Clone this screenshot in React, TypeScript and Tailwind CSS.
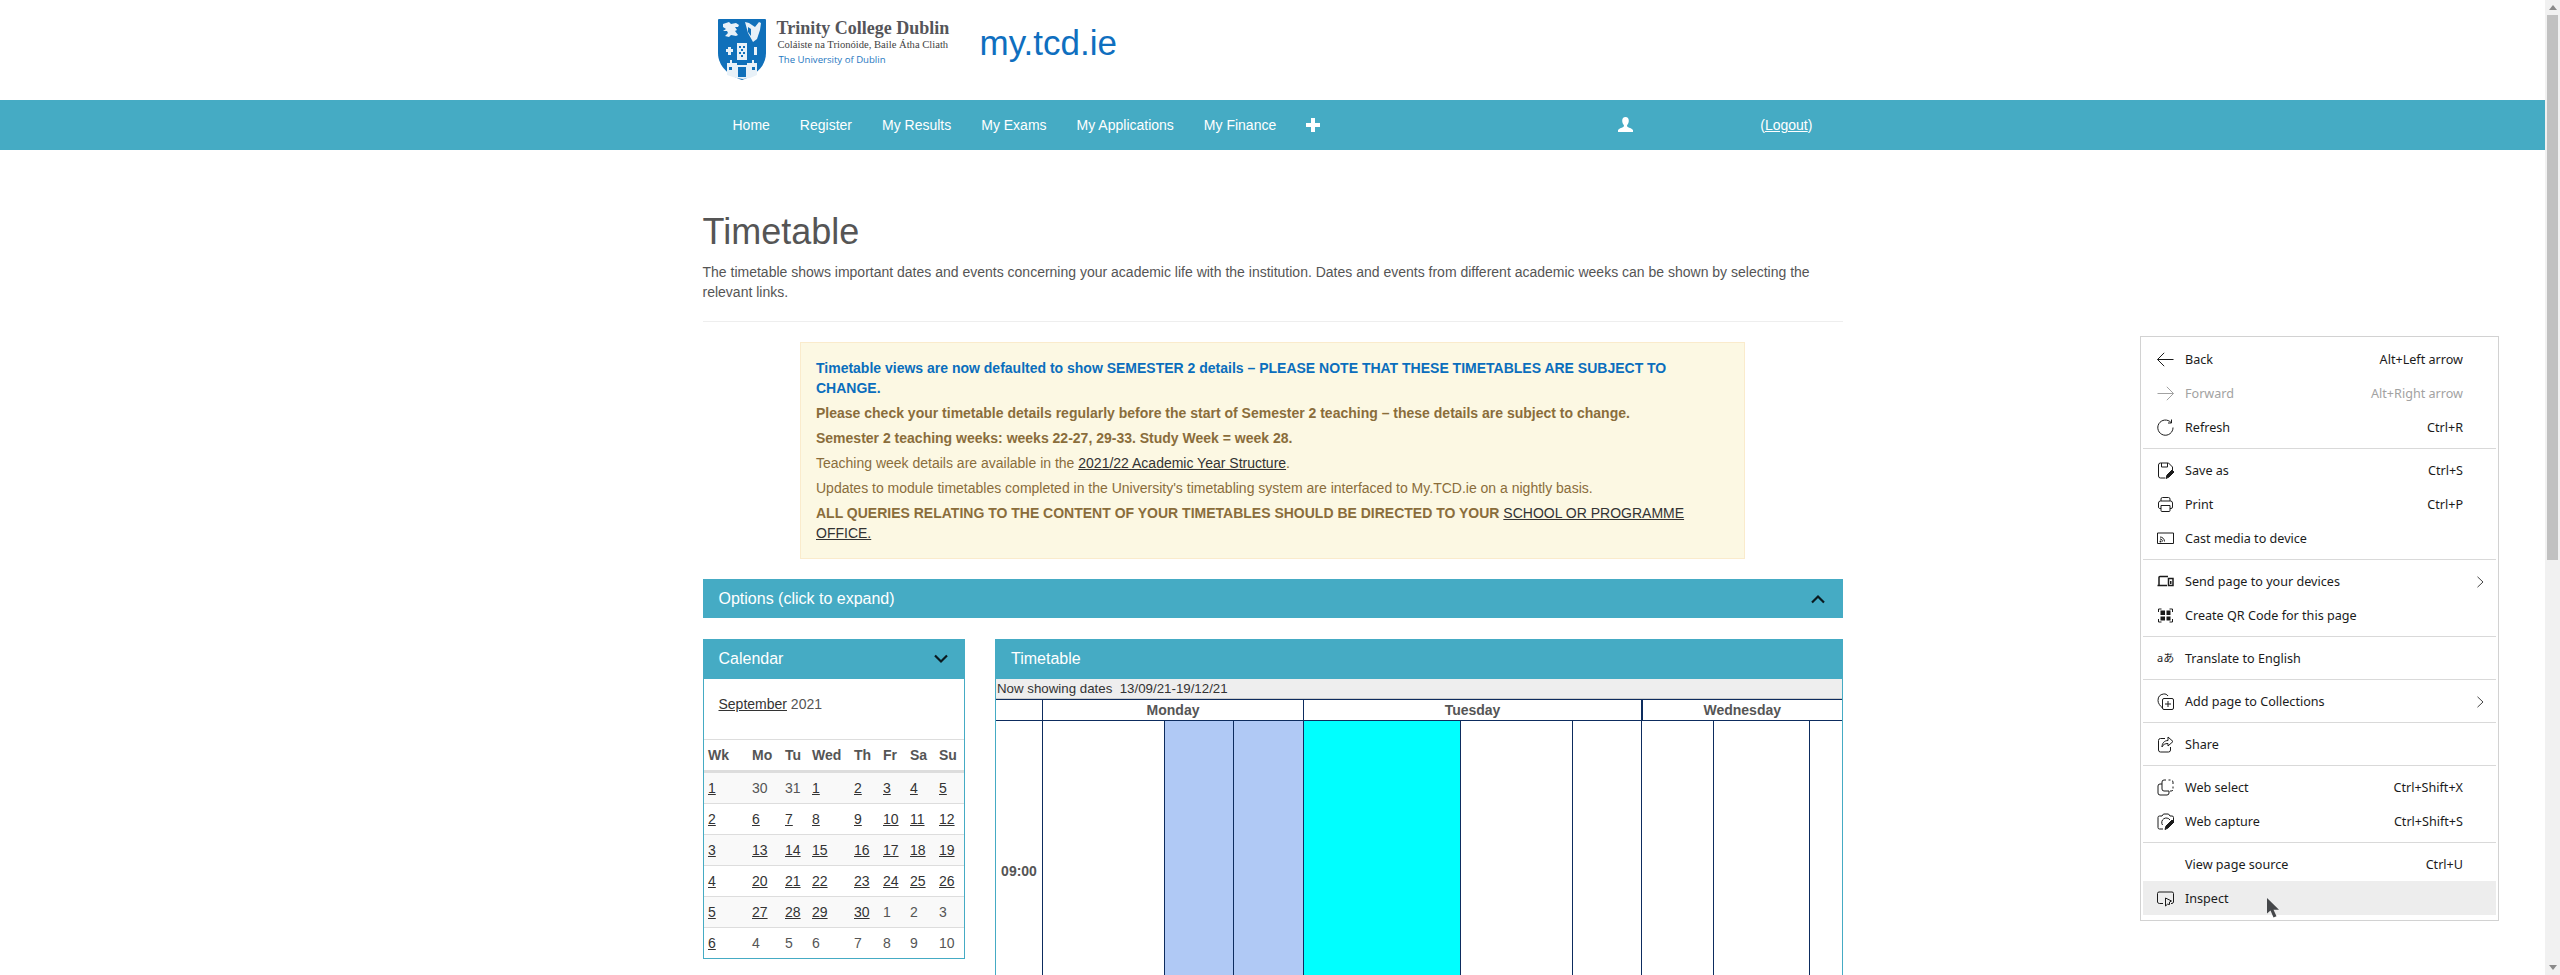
import type { ReactNode } from 'react'

const calendarHead = ['Wk', 'Mo', 'Tu', 'Wed', 'Th', 'Fr', 'Sa', 'Su']

// a leading ~ means the day is plain text, not a link
const calendarRows = [
  ['1', '~30', '~31', '1', '2', '3', '4', '5'],
  ['2', '6', '7', '8', '9', '10', '11', '12'],
  ['3', '13', '14', '15', '16', '17', '18', '19'],
  ['4', '20', '21', '22', '23', '24', '25', '26'],
  ['5', '27', '28', '29', '30', '~1', '~2', '~3'],
  ['6', '~4', '~5', '~6', '~7', '~8', '~9', '~10'],
]

const navLinks = ['Home', 'Register', 'My Results', 'My Exams', 'My Applications', 'My Finance']

function MenuIcon({ children }: { children: ReactNode }) {
  return (
    <svg width="17" height="17" viewBox="0 0 17 17" fill="none" stroke="currentColor" strokeWidth="1" className="shrink-0 -mt-[2px]">
      {children}
    </svg>
  )
}

const icons: Record<string, ReactNode> = {
  back: <MenuIcon><path d="M.5 8.5h16M7.2 1.8.5 8.5l6.7 6.7" /></MenuIcon>,
  forward: <MenuIcon><path d="M.5 8.5h16M9.8 1.8l6.7 6.7-6.7 6.7" /></MenuIcon>,
  refresh: <MenuIcon><path d="M14 3.5A7.6 7.6 0 1 0 16 8.5M14.5.5v3.5H11" /></MenuIcon>,
  save: (
    <MenuIcon>
      <path d="M8 16H3.5a2 2 0 0 1-2-2V3a2 2 0 0 1 2-2h8l4 4v3M4.5 1v4h6V1" />
      <path d="M9 16.5l1-3.5 5-5 2 2-5 5z" fill="currentColor" />
    </MenuIcon>
  ),
  print: (
    <MenuIcon>
      <path d="M4 5V3a1.500 1.500 0 0 1 1.500-1.500h6A1.500 1.500 0 0 1 13 3v2" />
      <path d="M4 12.500H2.500a1.500 1.500 0 0 1-1-1.400V7a2 2 0 0 1 2-2h10a2 2 0 0 1 2 2v4a1.500 1.500 0 0 1-1.500 1.500H13" />
      <path d="M4 9.500h9v5a1 1 0 0 1-1 1H5a1 1 0 0 1-1-1z" />
    </MenuIcon>
  ),
  cast: (
    <MenuIcon>
      <path d="M.5 3h16v10.500H.5z" />
      <path d="M3 7c2.500 0 4.500 2 4.500 4.500M3 9c1.500 0 2.500 1 2.500 2.500" />
      <circle cx="3.500" cy="11.500" r="1" fill="currentColor" stroke="none" />
    </MenuIcon>
  ),
  send: (
    <MenuIcon>
      <path d="M2 12V4.500A1 1 0 0 1 3 3.500h8M.5 12.500H10" strokeWidth="1.500" />
      <path d="M11.500 5.500h4.500v7h-4.500z" strokeWidth="1.500" />
      <path d="M13 8h1.500v3H13z" fill="currentColor" stroke="none" />
    </MenuIcon>
  ),
  qr: (
    <MenuIcon>
      <path d="M1.500 5V2h3M12.500 2h3v3M15.500 12v3h-3M4.500 15h-3v-3" />
      <path d="M3.500 3.500h4.500v4.500H3.500zM9.500 3.500h4v4.500h-4zM3.500 9.500h4.500v4H3.500zM9.500 9.500h4v4h-4z" fill="currentColor" stroke="none" />
    </MenuIcon>
  ),
  translate: <span className="w-[17px] shrink-0 text-[11px] leading-none whitespace-nowrap -mt-[3px]">a<span className="[font-family:'Noto_Sans_CJK_JP',sans-serif]">あ</span></span>,
  collections: (
    <MenuIcon>
      <path d="M5.500 15C3 13 1 10 1 7.500 1 3.500 3 1.500 6.500 1c2-.3 3.500.5 4.500 2" />
      <path d="M7 5.500h8a1.500 1.500 0 0 1 1.500 1.500v8a1.500 1.500 0 0 1-1.500 1.500H7A1.500 1.500 0 0 1 5.500 15V7A1.500 1.500 0 0 1 7 5.500zM11 8v6M8 11h6" />
    </MenuIcon>
  ),
  share: (
    <MenuIcon>
      <path d="M8 2.500H3.500a2 2 0 0 0-2 2V14a2 2 0 0 0 2 2h8a2 2 0 0 0 2-2v-3" />
      <path d="M11 1l5 4.500-5 4.500V7.500c-3 0-5 1-6 3.500 0-4 2.500-6.500 6-6.500z" />
    </MenuIcon>
  ),
  select: (
    <MenuIcon>
      <path d="M5 5V3a2 2 0 0 1 2-2h2M11.500 1h2M15 1.500a2 2 0 0 1 1 1.500v2M16 7.500v2M16 11a2 2 0 0 1-2 1h-1" />
      <path d="M5 5H3a2 2 0 0 0-2 2v7a2 2 0 0 0 2 2h7a2 2 0 0 0 2-2v-2H7a2 2 0 0 1-2-2z" />
    </MenuIcon>
  ),
  capture: (
    <MenuIcon>
      <path d="M5 3l1.500-2h5L13 3h2a1.500 1.500 0 0 1 1.500 1.500V8M6 16H2.500A1.500 1.500 0 0 1 1 14.500v-10A1.500 1.500 0 0 1 2.500 3H5" />
      <path d="M5.500 12a4.500 4.500 0 1 1 7.500-5" />
      <path d="M8 16.500l1-3.500 6-6 2 2-6 6z" fill="currentColor" />
    </MenuIcon>
  ),
  inspect: (
    <MenuIcon>
      <path d="M6 13.500H2.500a2 2 0 0 1-2-1.500V3.500a1.500 1.500 0 0 1 1.500-1.500h13a1.500 1.500 0 0 1 1.500 1.500V12a2 2 0 0 1-1.500 1.500H14" />
      <path d="M8.500 8v8l2-1.800 2 .3V12l2-1z" />
    </MenuIcon>
  ),
}

type MenuRow = { label: string; icon?: string; keys?: string; sub?: boolean; off?: boolean; hover?: boolean }

const menu: MenuRow[][] = [
  [
    { label: 'Back', icon: 'back', keys: 'Alt+Left arrow' },
    { label: 'Forward', icon: 'forward', keys: 'Alt+Right arrow', off: true },
    { label: 'Refresh', icon: 'refresh', keys: 'Ctrl+R' },
  ],
  [
    { label: 'Save as', icon: 'save', keys: 'Ctrl+S' },
    { label: 'Print', icon: 'print', keys: 'Ctrl+P' },
    { label: 'Cast media to device', icon: 'cast' },
  ],
  [
    { label: 'Send page to your devices', icon: 'send', sub: true },
    { label: 'Create QR Code for this page', icon: 'qr' },
  ],
  [{ label: 'Translate to English', icon: 'translate' }],
  [{ label: 'Add page to Collections', icon: 'collections', sub: true }],
  [{ label: 'Share', icon: 'share' }],
  [
    { label: 'Web select', icon: 'select', keys: 'Ctrl+Shift+X' },
    { label: 'Web capture', icon: 'capture', keys: 'Ctrl+Shift+S' },
  ],
  [
    { label: 'View page source', keys: 'Ctrl+U' },
    { label: 'Inspect', icon: 'inspect', hover: true },
  ],
]

function ContextMenu() {
  return (
    <div className="absolute left-[2140px] top-[336px] w-[359px] border border-[#d2d2d2] bg-white px-[2px] py-[5px] font-['Noto_Sans',sans-serif] text-[12.600px] text-[#1b1b1b]">
      {menu.map((group, i) => (
        <div key={i}>
          {i > 0 && <div className="my-[4px] h-px bg-[#d9d9d9]" />}
          {group.map((row) => (
            <div
              key={row.label}
              className={`flex h-[34px] items-center pt-[2px] pl-[14px] ${row.sub ? 'pr-[12px]' : 'pr-[33px]'} ${row.hover ? 'bg-[#ededed]' : ''} ${row.off ? 'text-[#a2a2a2]' : ''}`}
            >
              <span className="flex w-[28px] shrink-0 items-center">{row.icon && icons[row.icon]}</span>
              <span>{row.label}</span>
              {row.keys && <span className="ml-auto">{row.keys}</span>}
              {row.sub && (
                <svg width="7" height="12" viewBox="0 0 7 12" fill="none" stroke="#444" className="ml-auto">
                  <path d="M.5.800l5.500 5.200-5.500 5.200" />
                </svg>
              )}
            </div>
          ))}
        </div>
      ))}
    </div>
  )
}

function TcdLogo() {
  return (
    <div className="flex items-start">
      <svg width="48" height="61" viewBox="0 0 48 61" className="shrink-0">
        <path d="M1 0h46a1 1 0 0 1 1 1v33c0 14-12 23-24 27C12 57 0 48 0 34V1a1 1 0 0 1 1-1z" fill="#1070ba" />
        <g fill="#e8f1f8">
          <path d="M5 5l6-2 2 2 5-1 3 2-1 2-3 0 2 3-2 1 3 4-2 1-5-1-2 2-4-1 3-3-1-2-4 0 3-2-3-2z" />
          <path d="M27 3l4 1 6 4 4-5 2 1-1 7-3 9-4 3-5-9z" />
          <path d="M19 24h10v17H19z" />
          <path d="M10 28h3v2h2v3h-2v3h-3v-3H8v-3h2zM36 28h3v8h-3z" />
          <path d="M9 44h3v-3h2v3h5v2h10v-2h5v-3h2v3h3v12l-7 3-7 1-7-1-9-3z" />
        </g>
        <g fill="#1070ba">
          <path d="M21 27h2v2h-2zM25 27h2v2h-2zM23 30h2v2h-2zM21 33h2v2h-2zM25 33h2v2h-2zM23 36h2v2h-2z" />
          <path d="M20 48h8v10h-8zM11 48h3v3h-3zM34 48h3v3h-3z" />
          <path d="M30 8l3 2v7l-3-4z" />
        </g>
      </svg>
      <div className="ml-[11px] w-[175px] pt-[1px]">
        <div className="h-[17px] whitespace-nowrap font-['Liberation_Serif',serif] text-[18px] leading-[17px] font-bold text-[#55555a]">Trinity College Dublin</div>
        <div className="mt-[1px] h-[13px] whitespace-nowrap pl-[1px] font-['Liberation_Serif',serif] text-[10.600px] leading-[13px] text-[#3f3f42]">Coláiste na Trionóide, Baile Átha Cliath</div>
        <div className="mt-[2px] h-[13px] whitespace-nowrap pl-[2px] font-['Open_Sans',sans-serif] text-[9.600px] leading-[13px] text-[#1f78c1]">The University of Dublin</div>
      </div>
    </div>
  )
}

function Chevron({ up }: { up?: boolean }) {
  return (
    <svg width="14" height="10" viewBox="0 0 14 10" fill="none" stroke="#0a1a20" strokeWidth="2.200">
      <path d={up ? 'M1 8.500l6-6 6 6' : 'M1 1.500l6 6 6-6'} />
    </svg>
  )
}

function Calendar() {
  return (
    <div>
      <div className="flex h-[40px] items-center justify-between bg-[#45abc4] pl-[16px] pr-[17px] text-base text-white">
        <span>Calendar</span>
        <Chevron />
      </div>
      <div className="border-x border-b border-[#45abc4]">
        <p className="px-[15px] pt-[15px] pb-[25px] leading-[20px] text-[#555]">
          <a className="text-[#333] underline">September</a> 2021
        </p>
        <table className="w-full table-fixed border-separate border-spacing-0">
          <colgroup>
            <col className="w-[44px]" />
            <col className="w-[33px]" />
            <col className="w-[27px]" />
            <col className="w-[42px]" />
            <col className="w-[29px]" />
            <col className="w-[27px]" />
            <col className="w-[29px]" />
            <col />
          </colgroup>
          <thead>
            <tr>
              {calendarHead.map((h) => (
                <th key={h} className="h-[34px] border-t border-b-[3px] border-t-[#ddd] border-b-[#ddd] pl-[4.500px] text-left font-bold text-[#555]">{h}</th>
              ))}
            </tr>
          </thead>
          <tbody>
            {calendarRows.map((row, r) => (
              <tr key={r} className={r % 2 === 0 ? 'bg-[#f9f9f9]' : ''}>
                {row.map((day, c) => (
                  <td key={c} className={`pl-[4.500px] ${r < 5 ? 'h-[31px] border-b border-[#ddd]' : 'h-[30px]'}`}>
                    {day.startsWith('~') ? <span className="text-[#555]">{day.slice(1)}</span> : <a className="text-[#333] underline">{day}</a>}
                  </td>
                ))}
              </tr>
            ))}
          </tbody>
        </table>
      </div>
    </div>
  )
}

function Timetable() {
  const line = 'border-l border-[#0d2c5e]'
  return (
    <div className="border-x border-[#45abc4]">
      <div className="-mx-px flex h-[40px] items-center bg-[#45abc4] pl-[16px] text-base text-white">Timetable</div>
      <div className="h-[20px] border-b border-[#ccc] bg-[#eee] pl-[1px] text-[13.300px] leading-[19px] whitespace-pre text-[#333]">Now showing dates  13/09/21-19/12/21</div>
      <table className="w-full table-fixed border-separate border-spacing-0">
        <colgroup>
          <col className="w-[46px]" />
          <col className="w-[122px]" />
          <col className="w-[69px]" />
          <col className="w-[70px]" />
          <col className="w-[157px]" />
          <col className="w-[112px]" />
          <col className="w-[69px]" />
          <col className="w-[72px]" />
          <col className="w-[96px]" />
          <col />
        </colgroup>
        <thead>
          <tr className="text-center font-bold text-[#555]">
            <th className="h-[22px] border-y border-[#0d2c5e]" />
            <th colSpan={3} className={`border-y border-[#0d2c5e] ${line}`}>Monday</th>
            <th colSpan={3} className={`border-y border-[#0d2c5e] ${line}`}>Tuesday</th>
            <th colSpan={3} className="border-y border-l-2 border-[#0d2c5e]">Wednesday</th>
          </tr>
        </thead>
        <tbody>
          <tr>
            <th className="h-[300px] font-bold text-[#555]">09:00</th>
            <td className={line} />
            <td className={`${line} bg-[#b0c9f5]`} />
            <td className={`${line} bg-[#b0c9f5]`} />
            <td className={`${line} bg-[#00ffff]`} />
            <td className={line} />
            <td className={line} />
            <td className={line} />
            <td className={line} />
            <td className={line} />
          </tr>
        </tbody>
      </table>
    </div>
  )
}

export default function App() {
  return (
    <div className="flex h-[975px] overflow-hidden bg-white font-['Liberation_Sans',Arial,sans-serif] text-sm">
      <main className="relative min-w-0 flex-1">
        <header className="mx-auto flex h-[100px] w-[1170px] items-start px-[30px] pt-[19px]">
          <TcdLogo />
          <a className="ml-[28px] mt-[3px] text-[35px] leading-[42px] text-[#0f6fbf]">my.tcd.ie</a>
        </header>

        <nav className="h-[50px] bg-[#45abc4] text-white">
          <div className="mx-auto flex h-full w-[1170px] items-center pl-[30px]">
            {navLinks.map((link) => (
              <a key={link} className="px-[15px]">{link}</a>
            ))}
            <svg width="14" height="14" viewBox="0 0 14 14" fill="#fff" className="ml-[15px]">
              <path d="M5 0h4v5h5v4H9v5H5V9H0V5h5z" />
            </svg>
            <svg width="15" height="15" viewBox="0 0 15 15" fill="#fff" className="ml-[298px] -mt-[2px]">
              <path d="M7.500 0C9.700 0 10.800 1.600 10.800 3.800c0 1.800-.8 3.300-1.600 4.200-.3.700-.2 1.500.5 1.900 1.800.9 4.700 1.700 5.300 3.100V15H0v-2c.6-1.400 3.500-2.200 5.300-3.100.7-.4.800-1.200.5-1.900C5 7.100 4.200 5.600 4.200 3.800 4.200 1.600 5.300 0 7.500 0z" />
            </svg>
            <span className="ml-[127px]">(<a className="underline">Logout</a>)</span>
          </div>
        </nav>

        <div className="mx-auto w-[1170px] px-[15px] pt-[62px] text-[#555]">
          <h1 className="mb-[10px] text-[36px] leading-[40px] font-normal">Timetable</h1>
          <p className="leading-[20px]">
            The timetable shows important dates and events concerning your academic life with the institution. Dates and events from different academic weeks can be shown by selecting the relevant links.
          </p>
          <hr className="mt-[19px] mb-[20px] border-[#eee]" />

          <div className="mx-auto mb-[20px] w-[945px] border border-[#faebcc] bg-[#fcf8e3] p-[15px] leading-[20px] text-[#8a6d3b]">
            <p className="font-bold text-[#0a6ebd]">Timetable views are now defaulted to show SEMESTER 2 details – PLEASE NOTE THAT THESE TIMETABLES ARE SUBJECT TO CHANGE.</p>
            <p className="mt-[5px] font-bold">Please check your timetable details regularly before the start of Semester 2 teaching – these details are subject to change.</p>
            <p className="mt-[5px] font-bold">Semester 2 teaching weeks: weeks 22-27, 29-33. Study Week = week 28.</p>
            <p className="mt-[5px]">Teaching week details are available in the <a className="text-[#333] underline">2021/22 Academic Year Structure</a>.</p>
            <p className="mt-[5px]">Updates to module timetables completed in the University's timetabling system are interfaced to My.TCD.ie on a nightly basis.</p>
            <p className="mt-[5px] font-bold">ALL QUERIES RELATING TO THE CONTENT OF YOUR TIMETABLES SHOULD BE DIRECTED TO YOUR <a className="font-normal text-[#333] underline">SCHOOL OR PROGRAMME OFFICE.</a></p>
          </div>

          <div className="flex h-[39px] items-center justify-between bg-[#45abc4] pl-[16px] pr-[18px] text-base text-white">
            <span>Options (click to expand)</span>
            <Chevron up />
          </div>

          <div className="mt-[21px] grid grid-cols-[262.500px_847.500px] gap-[30px]">
            <Calendar />
            <Timetable />
          </div>
        </div>

        <ContextMenu />

        <svg width="13" height="20" viewBox="0 0 13 20" fill="#45474a" className="absolute left-[2267px] top-[898px]">
          <path d="M0 0v15.500l3.500-3 3 7 3-1.200-3-6.500h5.500z" />
        </svg>
      </main>

      <aside className="flex w-[15px] shrink-0 flex-col bg-[#f1f1f1]">
        <div className="flex h-[15px] items-center justify-center">
          <svg width="8" height="5" viewBox="0 0 8 5" fill="#8a8a8a"><path d="M4 0l4 5H0z" /></svg>
        </div>
        <div className="mx-[2px] h-[545px] bg-[#c1c1c1]" />
        <div className="mt-auto flex h-[15px] items-center justify-center">
          <svg width="8" height="5" viewBox="0 0 8 5" fill="#8a8a8a"><path d="M4 5l4-5H0z" /></svg>
        </div>
      </aside>
    </div>
  )
}
